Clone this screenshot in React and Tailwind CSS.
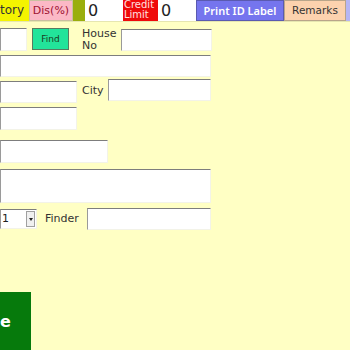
import React from "react";

const inp = "bg-white border border-t-[#7d7d7d] border-l-[#9a9a9a] border-r-[#f3f3e8] border-b-[#f3f3e8] box-border";

export default function App() {
  return (
    <div className="w-[350px] h-[350px] overflow-hidden bg-[#ffffc4] font-['DejaVu_Sans',Verdana,sans-serif] text-[#333]">
      {/* top bar */}
      <div className="flex h-[22px] border-b border-[#e6e6b0]">
        <div className="w-[29px] bg-[#f4f400] text-[12px] leading-[21px] text-[#333] overflow-hidden">tory</div>
        <div className="w-[44px] bg-[#fbb8c6] border border-[#c9c0a0] text-[11px] leading-[19px] text-[#9e1232] text-center">Dis(%)</div>
        <div className="w-[12px] bg-[#9aae0c]"></div>
        <div className="w-[38px] bg-white text-[16px] leading-[21px] pl-[3px] text-[#222]">0</div>
        <div className="w-[35px] bg-[#ef0a0a] text-[#ffe0e0] text-[10px] leading-[10px] pl-[1px] flex flex-col">
          <span>Credit</span>
          <span>Limit</span>
        </div>
        <div className="w-[38px] bg-white text-[16px] leading-[21px] pl-[3px] text-[#222]">0</div>
        <div className="w-[88px] bg-[#7575ee] border border-[#5a5ab0] text-white font-semibold font-['Noto_Sans',sans-serif] text-[11px] leading-[19px] text-center">Print ID Label</div>
        <div className="w-[62px] bg-[#fcd2ae] border border-[#b9a58a] text-[10.5px] leading-[19px] text-[#333] text-center">Remarks</div>
        <div className="flex-1 bg-[#b6b6f4]"></div>
      </div>

      {/* row 2 */}
      <div className="flex items-start mt-[6px] h-[24px]">
        <div className={`${inp} w-[27px] h-[23px]`}></div>
        <div className="ml-[5px] w-[37px] h-[22px] bg-[#22e49a] border border-[#5a7a60] text-[9px] leading-[20px] text-center text-[#1a3a20]">Find</div>
        <div className="ml-[13px] w-[39px] text-[11px] leading-[12px] text-[#333]">House<br />No</div>
        <div className={`${inp} w-[91px] h-[22px] mt-[1px]`}></div>
      </div>

      {/* row 3 */}
      <div className={`${inp} w-[211px] h-[22px] mt-[3px]`}></div>

      {/* row 4 */}
      <div className="flex items-start mt-[2px]">
        <div className={`${inp} w-[77px] h-[22px] mt-[2px]`}></div>
        <div className="ml-[5px] w-[26px] text-[11px] leading-[22px] mt-[1px]">City</div>
        <div className={`${inp} w-[103px] h-[22px]`}></div>
      </div>

      {/* row 5 */}
      <div className={`${inp} w-[77px] h-[23px] mt-[4px]`}></div>

      {/* row 6 */}
      <div className={`${inp} w-[108px] h-[23px] mt-[10px]`}></div>

      {/* row 7 */}
      <div className={`${inp} w-[211px] h-[34px] mt-[6px]`}></div>

      {/* row 8 */}
      <div className="flex items-start mt-[5px]">
        <div className={`${inp} w-[37px] h-[20px] mt-[1px] flex items-center justify-between`}>
          <span className="text-[11px] leading-[18px] text-[#222] pl-[1px]">1</span>
          <span className="w-[9px] h-[16px] mr-[1px] bg-[#f0f0f0] border border-[#a0a0a0] flex items-center justify-center">
            <span className="block w-0 h-0 border-l-[2px] border-r-[2px] border-t-[3px] border-l-transparent border-r-transparent border-t-[#222]"></span>
          </span>
        </div>
        <div className="ml-[8px] w-[42px] text-[11px] leading-[22px]">Finder</div>
        <div className={`${inp} w-[124px] h-[22px]`}></div>
      </div>

      {/* green button */}
      <div className="mt-[62px] w-[31px] h-[60px] bg-[#067a0c] text-white font-bold text-[16px] leading-[60px]">e</div>
    </div>
  );
}
